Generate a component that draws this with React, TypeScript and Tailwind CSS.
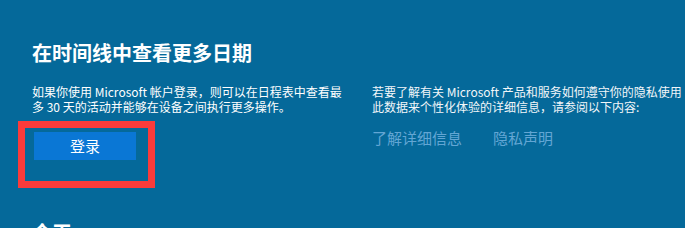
export default function App() {
  return (
    <div
      className="relative w-[685px] h-[228px] overflow-hidden bg-[#05699a] text-white"
      style={{ fontFamily: '"Noto Sans CJK SC", "Noto Sans", sans-serif' }}
    >
      <div className="pl-8 pt-[43px]">
        <h1 className="text-[20px] leading-[20px] font-semibold text-white whitespace-nowrap">
          在时间线中查看更多日期
        </h1>
        <div className="flex mt-[21px]">
          <div className="w-[340px] shrink-0">
            <p className="text-[12px] leading-[15px] text-white whitespace-nowrap">
              如果你使用 Microsoft 帐户登录，则可以在日程表中查看最
              <br />
              多 30 天的活动并能够在设备之间执行更多操作。
            </p>
            <button className="mt-[18px] ml-[2px] w-[102px] h-[28px] bg-[#0a77d5] text-white text-[15px] leading-[28px]">
              登录
            </button>
          </div>
          <div className="shrink-0">
            <p className="text-[12px] leading-[15px] text-[#f2f6f9] whitespace-nowrap">
              若要了解有关 Microsoft 产品和服务如何遵守你的隐私使用
              <br />
              此数据来个性化体验的详细信息，请参阅以下内容:
            </p>
            <div className="mt-[15px] flex gap-[31px] text-[15px] leading-[18px] text-[#63a6d4]">
              <span>了解详细信息</span>
              <span>隐私声明</span>
            </div>
          </div>
        </div>
        <h2 className="mt-[63px] text-[20px] leading-[20px] font-semibold text-white">今天</h2>
      </div>
      <div className="absolute left-[18px] top-[121px] w-[137px] h-[67px] border-[7px] border-[#fb3b3b]" />
    </div>
  );
}
